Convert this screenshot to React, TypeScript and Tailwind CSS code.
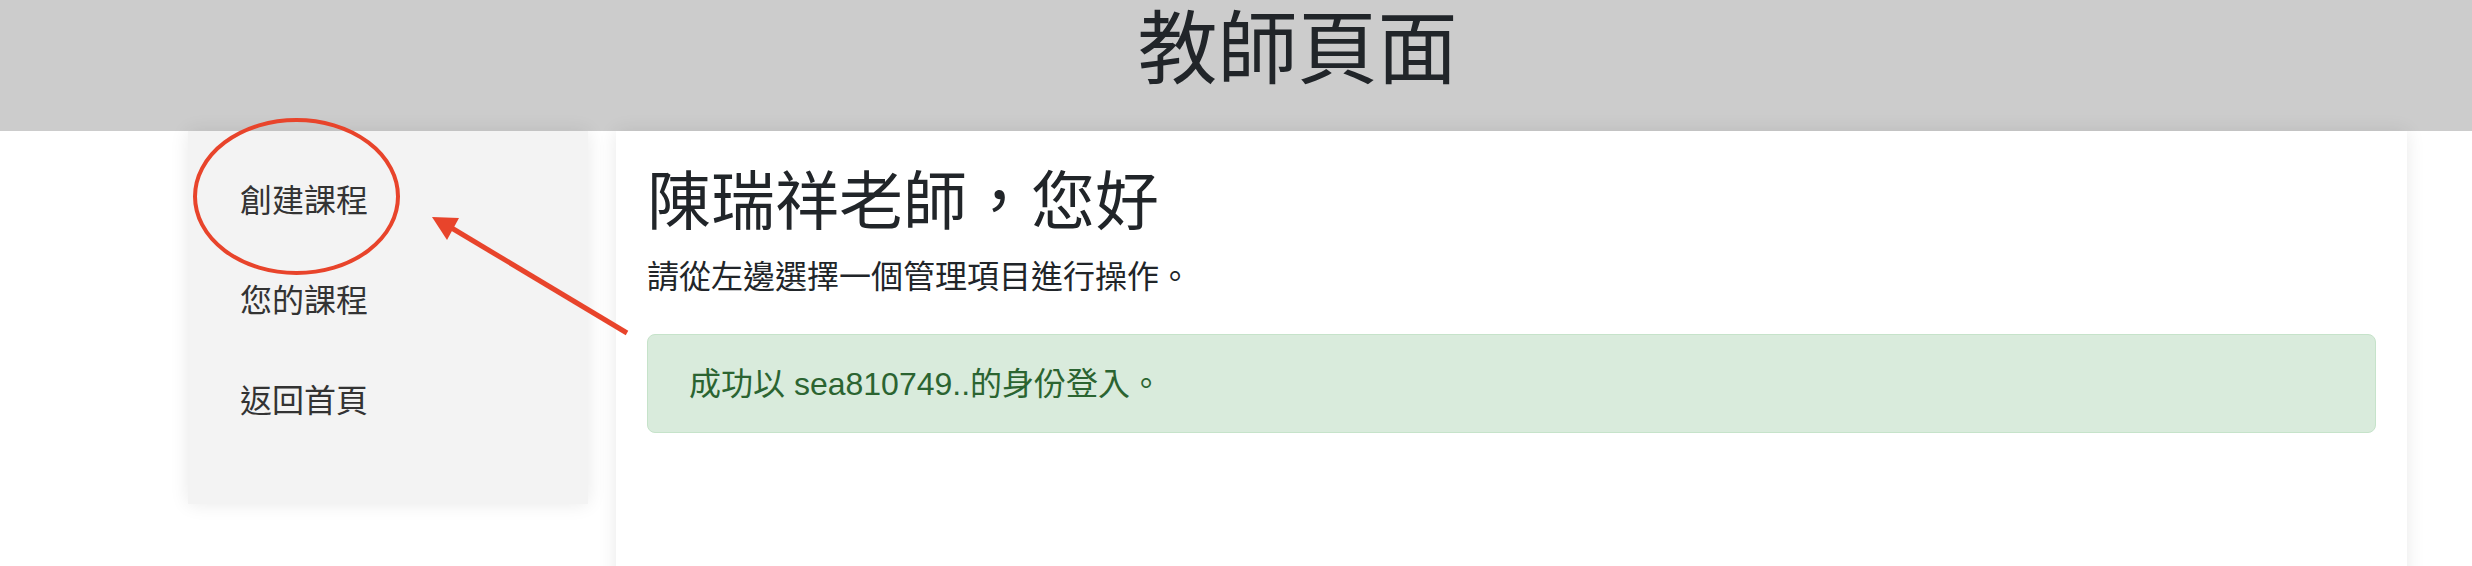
import React from "react";

export default function App() {
  const cjk = { fontFamily: '"Noto Sans CJK TC", "Noto Sans", sans-serif' };
  const mixed = { fontFamily: '"Liberation Sans", "Noto Sans CJK TC", sans-serif' };
  return (
    <div className="relative min-h-[566px] w-[2472px] overflow-hidden bg-white" style={cjk}>
      <header className="h-[131px] bg-[#cccccc]">
        <div className="ml-[188px] w-[2219px] text-center text-[80px] leading-[85px] text-[#212529]">
          教師頁面
        </div>
      </header>
      <div className="ml-[188px] flex w-[2219px] items-start gap-[28px]">
        <aside className="relative z-10 h-[373px] w-[400px] bg-[#f3f3f3] pl-[52px] pt-[17px] shadow-[0_0_18px_rgba(0,0,0,0.09)]">
          <div className="h-[100px] text-[32px] leading-[100px] text-[#333333]">創建課程</div>
          <div className="h-[100px] text-[32px] leading-[100px] text-[#333333]">您的課程</div>
          <div className="h-[100px] text-[32px] leading-[100px] text-[#333333]">返回首頁</div>
        </aside>
        <main className="relative z-10 h-[460px] flex-1 bg-white px-[31px] pt-[27px] shadow-[0_0_18px_rgba(0,0,0,0.09)]">
          <h1 className="text-[64px] leading-[76px] text-[#212529]">陳瑞祥老師，您好</h1>
          <p className="mt-[16px] text-[32px] leading-[48px] text-[#212529]">請從左邊選擇一個管理項目進行操作。</p>
          <div
            className="mt-[36px] flex h-[99px] items-center rounded-[8px] border border-[#c6e3ca] bg-[#d9ebdc] pl-[41px] text-[32px] text-[#2b6431]"
            style={mixed}
          >
            成功以 sea810749..的身份登入。
          </div>
        </main>
      </div>
      <svg
        className="pointer-events-none absolute left-0 top-0 z-20"
        width="2472"
        height="566"
        viewBox="0 0 2472 566"
      >
        <ellipse cx="296.5" cy="196.5" rx="101.5" ry="76.5" fill="none" stroke="#e8442b" strokeWidth="4" />
        <line x1="627" y1="333" x2="450" y2="227" stroke="#e8442b" strokeWidth="5" />
        <polygon points="432,217 459,218 447,240" fill="#e8442b" />
      </svg>
    </div>
  );
}
